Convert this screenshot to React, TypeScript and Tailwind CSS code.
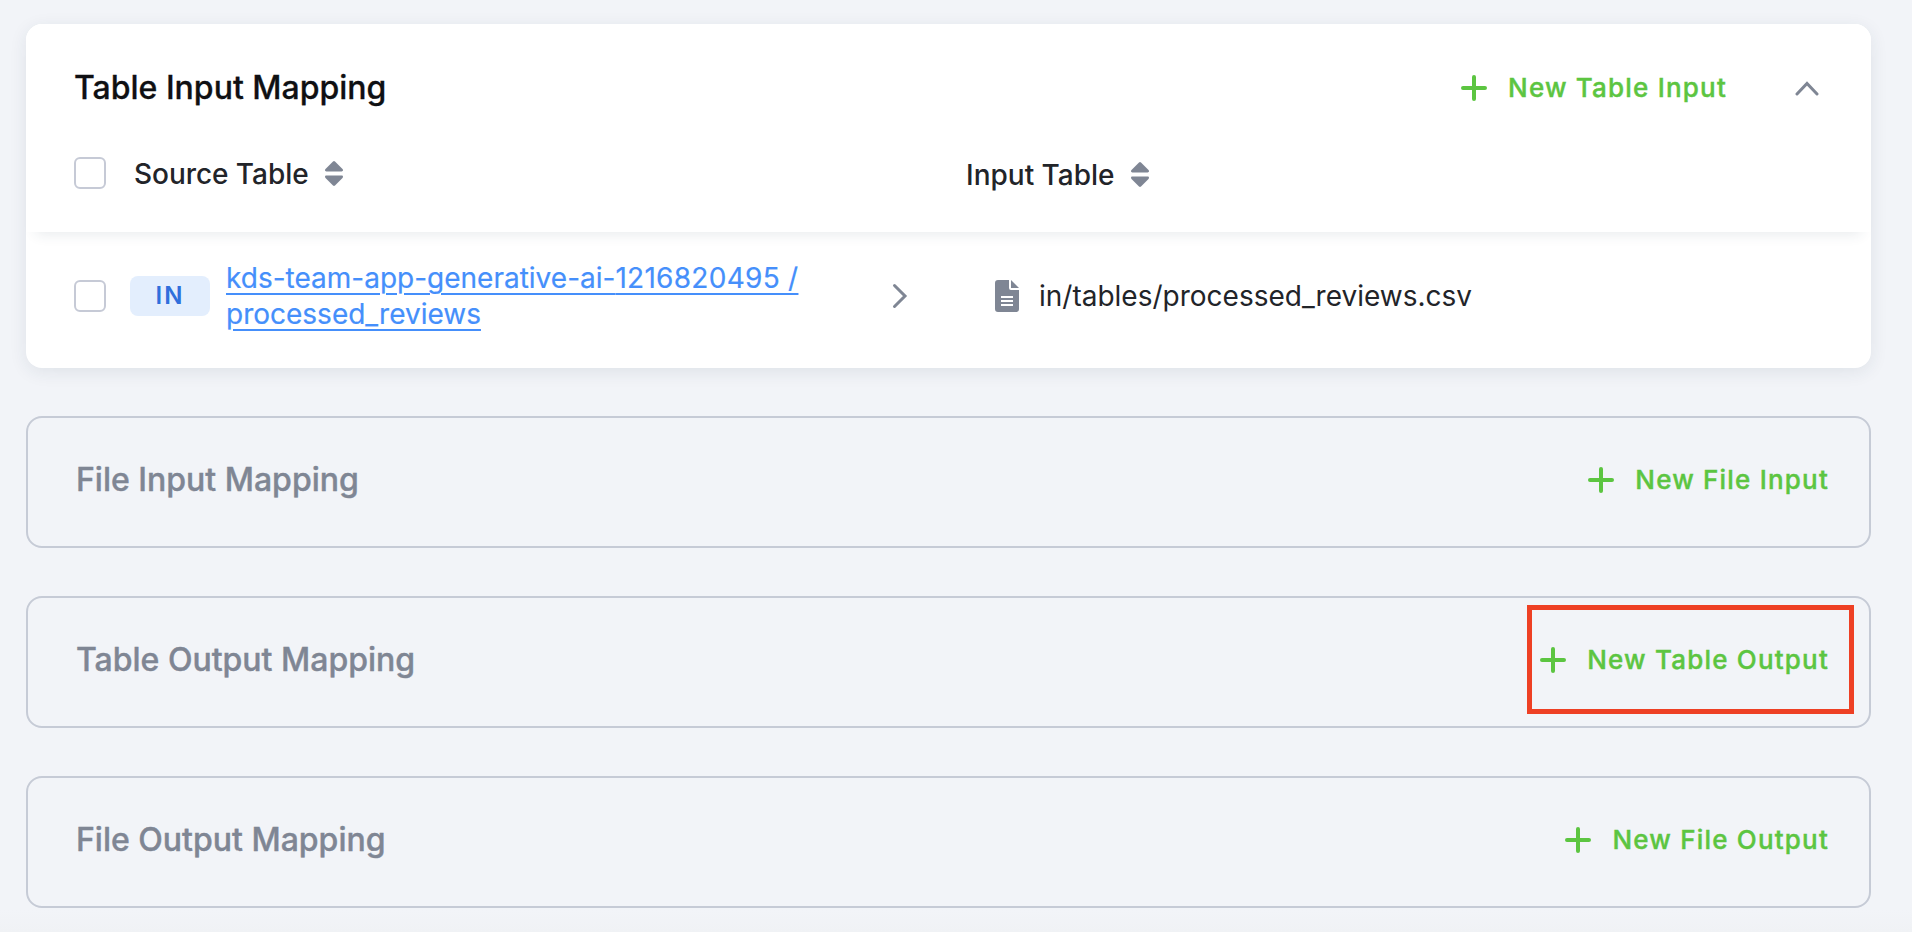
import React from "react";

function PlusIcon() {
  return (
    <svg width="26" height="26" viewBox="0 0 26 26" fill="none" stroke="currentColor" strokeWidth="4" strokeLinecap="round" className="shrink-0">
      <path d="M13 2v22M2 13h22" />
    </svg>
  );
}

function SortIcon() {
  return (
    <svg width="18" height="25" viewBox="0 0 18 25" fill="#7f8694" className="shrink-0">
      <path d="M8 .5a1.500 1.500 0 0 1 2 0l7.500 7.600c1 1.100.4 2.400-.9 2.400H1.400C.1 10.500-.5 9.200.5 8.100z" />
      <path d="M8 24.500a1.500 1.500 0 0 0 2 0l7.500-7.600c1-1.100.4-2.400-.9-2.400H1.400c-1.300 0-1.900 1.300-.9 2.400z" />
    </svg>
  );
}

function FileIcon() {
  return (
    <svg width="24" height="32" viewBox="0 0 24 32" className="shrink-0">
      <path fill="#7f8694" d="M3 0h11v8a2 2 0 0 0 2 2h8v19a3 3 0 0 1-3 3H3a3 3 0 0 1-3-3V3a3 3 0 0 1 3-3z" />
      <path fill="#7f8694" d="M16 0l8 8h-8z" />
      <path stroke="#fff" strokeWidth="2" d="M6 17h12M6 21h12M6 25h12" />
    </svg>
  );
}

function Checkbox() {
  return <span role="checkbox" aria-checked="false" className="size-8 shrink-0 rounded-md border-2 border-[#c6cad6] bg-white" />;
}

function NewButton({ label }: { label: string }) {
  return (
    <button className="flex items-center gap-[21px] text-[26px] leading-9 font-medium tracking-[1.2px] whitespace-nowrap text-[#5cc541] [-webkit-text-stroke:0.4px_#5cc541]">
      <PlusIcon />
      <span>{label}</span>
    </button>
  );
}

function EmptyMapping({ title, action, highlighted }: { title: string; action: string; highlighted?: boolean }) {
  return (
    <section className="relative flex h-[132px] shrink-0 items-center justify-between rounded-2xl border-2 border-[#c6cbd6] pr-10 pb-1 pl-12">
      <h2 className="text-[32px] leading-10 font-medium text-[#7f8694] [-webkit-text-stroke:0.4px_#7f8694]">{title}</h2>
      <NewButton label={action} />
      {highlighted && <span className="absolute top-[7px] right-[15px] h-[109px] w-[327px] border-[5px] border-[#ee4024]" />}
    </section>
  );
}

export default function App() {
  return (
    <main className="flex h-[932px] w-[1912px] flex-col gap-12 overflow-hidden bg-[linear-gradient(#f2f4f8_910px,#f0f2f5_932px)] pt-6 pr-[41px] pl-[26px] font-['Inter',sans-serif] text-[#222429]">
      <section className="h-[344px] shrink-0 rounded-2xl bg-white shadow-[0_4px_18px_rgba(34,60,80,0.09)]">
        <div className="relative z-10 h-[208px] rounded-t-2xl bg-white px-12 shadow-[0_12px_14px_-10px_rgba(34,60,80,0.11)]">
          <header className="flex h-32 items-center justify-between">
            <h2 className="text-[32px] leading-10 font-medium text-[#0f1013] [-webkit-text-stroke:0.3px_#0f1013]">Table Input Mapping</h2>
            <div className="flex items-center gap-[68px] pr-1">
              <NewButton label="New Table Input" />
              <svg width="24" height="16" viewBox="0 0 24 16" fill="none" stroke="#7f8694" strokeWidth="3" strokeLinecap="round">
                <path d="M2 14L12 3.500L22 14" />
              </svg>
            </div>
          </header>
          <div className="flex h-[42px] items-center text-[28px] leading-9 font-medium">
            <div className="flex w-[892px] items-center">
              <Checkbox />
              <span className="mr-4 ml-7 pt-0.5 tracking-[-0.05px]">Source Table</span>
              <SortIcon />
            </div>
            <div className="flex items-center gap-4 pt-[3px]">
              <span>Input Table</span>
              <SortIcon />
            </div>
          </div>
        </div>
        <div className="flex h-[136px] items-center px-12 pb-2 text-[28px] leading-9">
          <Checkbox />
          <span className="ml-6 flex h-10 w-20 items-center justify-center rounded-lg bg-[#e3eefd] text-2xl font-semibold tracking-[2px] text-[#2f6fdc]">IN</span>
          <a className="ml-4 w-[666px] text-[#458ffb] underline decoration-2 underline-offset-[5px] [-webkit-text-stroke:0.2px_#458ffb]">
            kds-team-app-generative-ai-<span className="tracking-[0.28px]">1216820495 /</span>
            <br />
            processed_reviews
          </a>
          <svg width="16" height="26" viewBox="0 0 16 26" fill="none" stroke="#7f8694" strokeWidth="3" strokeLinecap="round">
            <path d="M2.500 2.500L13 13L2.500 23.500" />
          </svg>
          <div className="ml-[87px] flex items-center gap-5">
            <FileIcon />
            <span>in/tables/processed_reviews.csv</span>
          </div>
        </div>
      </section>
      <EmptyMapping title="File Input Mapping" action="New File Input" />
      <EmptyMapping title="Table Output Mapping" action="New Table Output" highlighted />
      <EmptyMapping title="File Output Mapping" action="New File Output" />
    </main>
  );
}
